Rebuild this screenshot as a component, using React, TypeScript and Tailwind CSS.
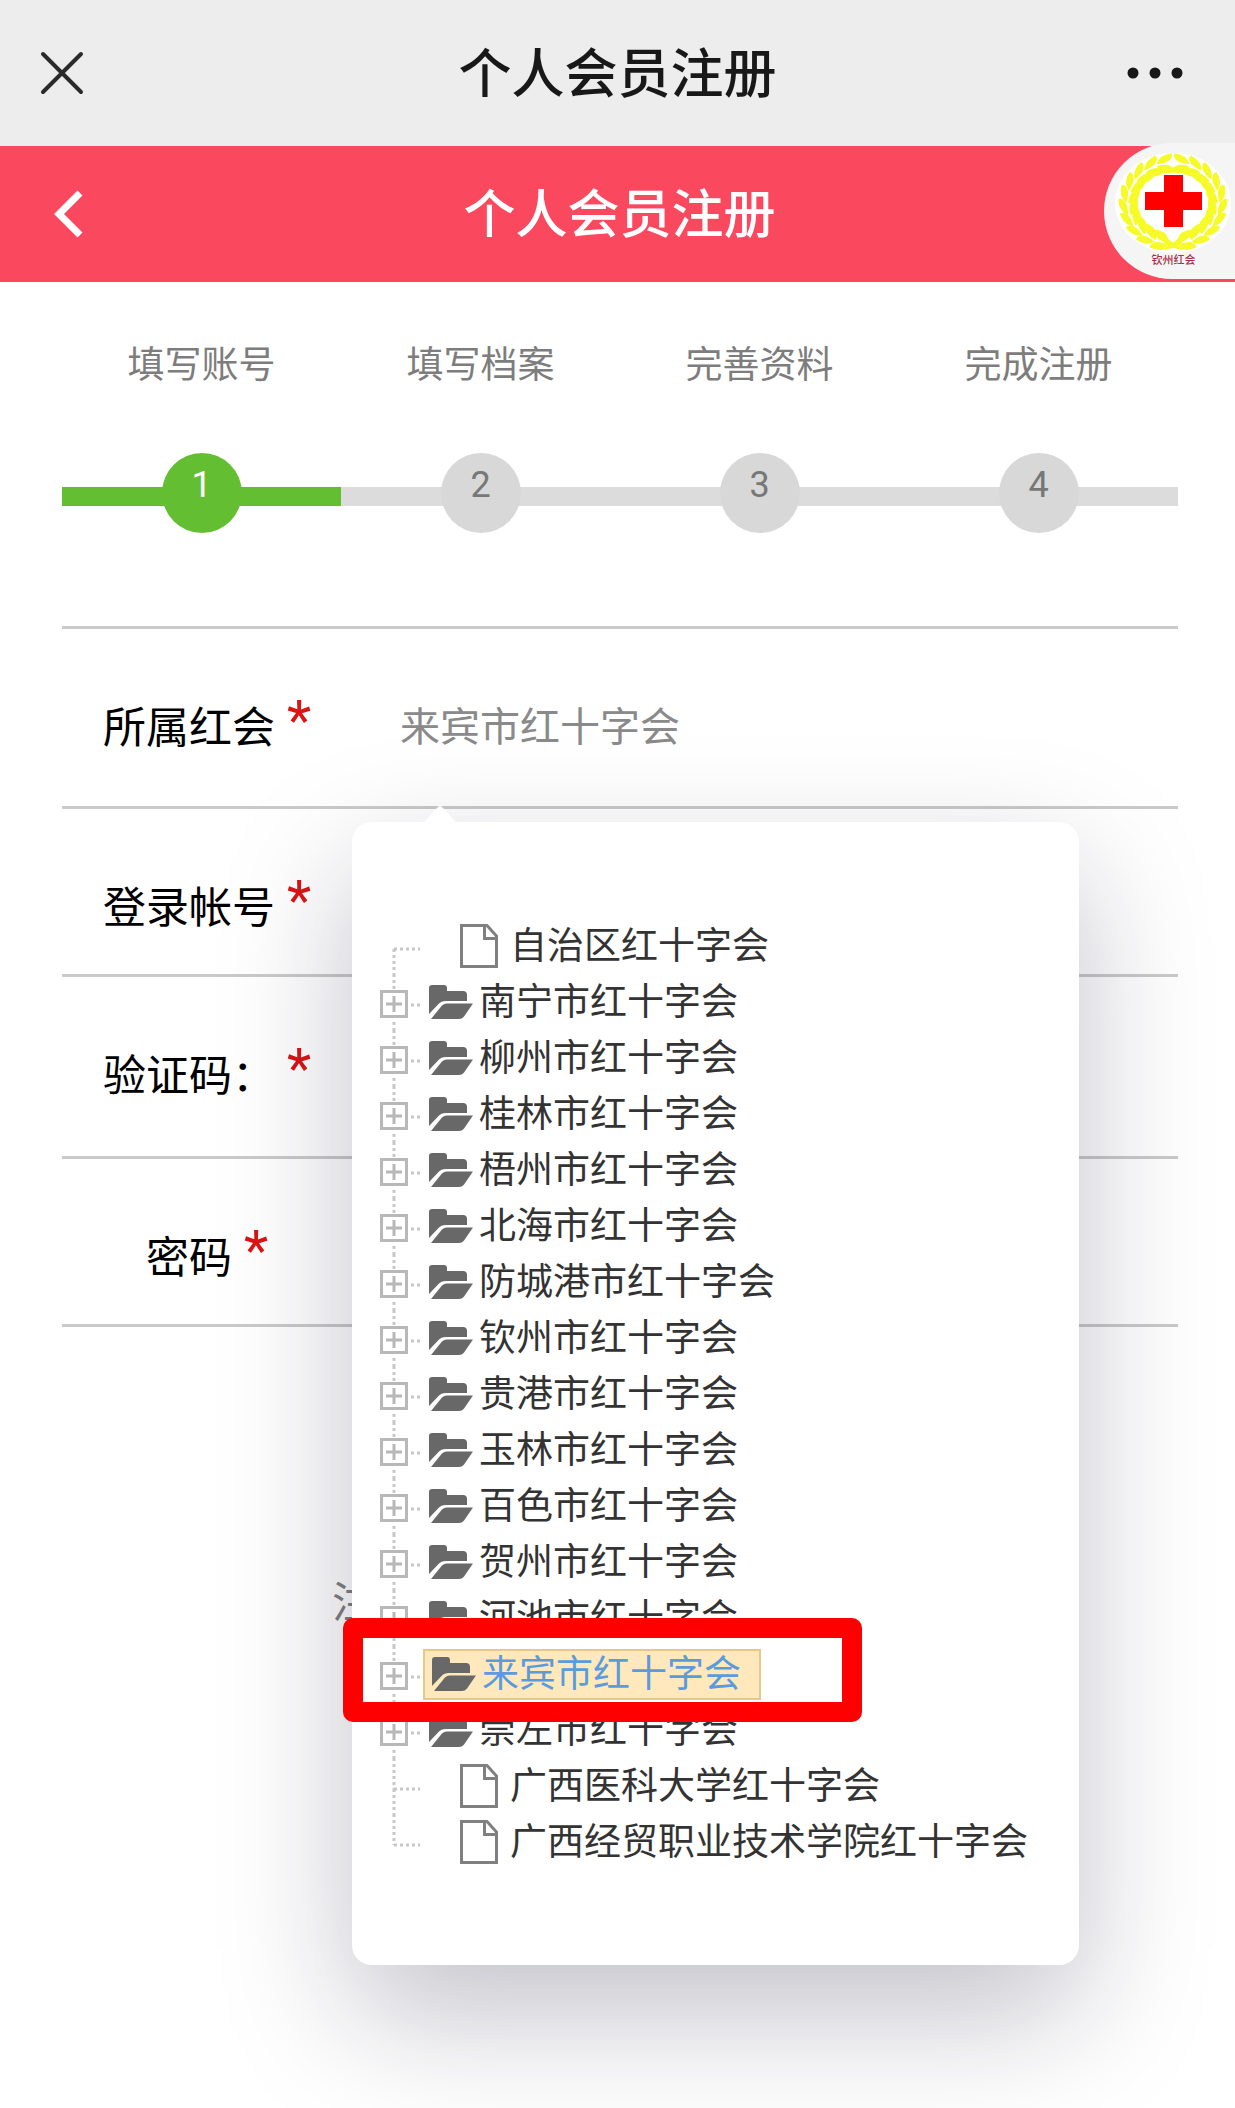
import { useState } from "react";
import clsx from "clsx";

type TreeNode = {
  name: string;
  leaf?: boolean;
};

const steps = ["填写账号", "填写档案", "完善资料", "完成注册"];

const nodes: TreeNode[] = [
  { name: "自治区红十字会", leaf: true },
  { name: "南宁市红十字会" },
  { name: "柳州市红十字会" },
  { name: "桂林市红十字会" },
  { name: "梧州市红十字会" },
  { name: "北海市红十字会" },
  { name: "防城港市红十字会" },
  { name: "钦州市红十字会" },
  { name: "贵港市红十字会" },
  { name: "玉林市红十字会" },
  { name: "百色市红十字会" },
  { name: "贺州市红十字会" },
  { name: "河池市红十字会" },
  { name: "来宾市红十字会" },
  { name: "崇左市红十字会" },
  { name: "广西医科大学红十字会", leaf: true },
  { name: "广西经贸职业技术学院红十字会", leaf: true },
];

const inputClass =
  "ml-[89px] h-[60px] min-w-0 flex-1 bg-transparent text-[40px] leading-[60px] text-[#8a8a8a] outline-none";

// one side of the wreath, bottom to top; the other side is mirrored
const leaves = Array.from({ length: 10 }, (_, i) => {
  const deg = 74 - i * 17;
  const t = (deg * Math.PI) / 180;
  return {
    x: 45 * Math.cos(t),
    y: 40 * Math.sin(t),
    angle: deg - 90,
  };
});

function Emblem() {
  const side = leaves.map((leaf, i) => (
    <g key={i} transform={`translate(${leaf.x} ${leaf.y}) rotate(${leaf.angle})`}>
      <path d="M-8 -1Q-5 -12 8 -10Q10 -6 5 -3Q0 0 -8 -1Z" />
      <path d="M-8 1Q-3 10 9 9Q10 5 5 2Q0 0 -8 1Z" />
    </g>
  ));
  return (
    <svg viewBox="0 0 131 110" className="h-[110px] w-[131px]" aria-hidden="true">
      <ellipse cx="69" cy="60" rx="58" ry="50" fill="#fff" />
      <g fill="#f6fa28" transform="translate(69 60)">
        <g>{side}</g>
        <g transform="scale(-1 1)">{side}</g>
        <path d="M-18 47Q-4 44 6 35L10 39Q0 48 -18 47Z" />
        <path d="M18 47Q4 44 -6 35L-10 39Q0 48 18 47Z" />
      </g>
      <path d="M60 32h19v17h19v18H79v17H60V67H41V49h19z" fill="#fe0000" />
    </svg>
  );
}

function FileIcon() {
  return (
    <svg viewBox="0 0 38 44" className="h-11 w-[38px] shrink-0" fill="none" stroke="#808080" strokeWidth="3">
      <path d="M1.5 1.5H27L36.5 12V42.5H1.5z" />
      <path d="M24.5 2V14.5H36" />
    </svg>
  );
}

function FolderIcon() {
  return (
    <svg viewBox="0 0 44 34" className="h-[34px] w-11 shrink-0" fill="#686868">
      <path d="M0 29V3Q0 0 3 0H15Q18 0 18 3V6H34Q38 6 38 10V16H16Q12 16 10 18.500Z" />
      <path d="M2 34L13 20.500Q15 18.500 18 18.500H44L35 31.500Q33 34 30 34Z" />
    </svg>
  );
}

function Switcher({ leaf, first, last }: { leaf?: boolean; first: boolean; last: boolean }) {
  return (
    <svg viewBox="0 0 40 56" className="h-14 w-10 shrink-0" fill="none" stroke="#c8c8c8" strokeWidth="3">
      <g strokeDasharray="3 3">
        {!first && <path d={leaf ? "M14 0V31" : "M14 0V16"} />}
        {!last && <path d={leaf ? "M14 31V56" : "M14 48V56"} />}
        <path d={leaf ? "M14 31H40" : "M31 31H40"} />
      </g>
      {!leaf && (
        <g strokeWidth="3" stroke="#b8b8b8">
          <rect x="1.500" y="17.500" width="25" height="25" />
          <path d="M6 30H22M14 22V38" />
        </g>
      )}
    </svg>
  );
}

function OrgTree({ value, onSelect }: { value: string; onSelect: (name: string) => void }) {
  return (
    <div className="absolute top-[193px] left-[290px] z-10 w-max rounded-[20px] bg-white pt-24 pr-[51px] pb-[95px] pl-7 shadow-[0_50px_130px_rgba(20,20,50,0.26)]">
      <svg viewBox="0 0 32 16" className="absolute -top-4 left-[72px] h-4 w-8" fill="#fff">
        <path d="M0 16L14 1Q16 -1 18 1L32 16z" />
      </svg>
      <ul>
        {nodes.map((node, i) => {
          const selected = node.name === value;
          return (
            <li key={node.name} className="relative flex h-14 items-center">
              <Switcher leaf={node.leaf} first={i === 0} last={i === nodes.length - 1} />
              <button
                type="button"
                onClick={() => onSelect(node.name)}
                className={clsx(
                  "flex items-center text-[37px] leading-[47px] whitespace-nowrap",
                  node.leaf ? "ml-10 gap-3" : "gap-[6px]",
                  !node.leaf && !selected && "ml-[9px]",
                  selected
                    ? "ml-[3px] border-2 border-[#e8c88a] bg-[#fee8bc] pr-[18px] pl-[7px] text-[#5b9bdc]"
                    : "text-[#333]"
                )}
              >
                {node.leaf ? <FileIcon /> : <FolderIcon />}
                {node.name}
              </button>
              {selected && (
                <div className="pointer-events-none absolute -top-7 -left-[37px] z-10 h-[104px] w-[519px] rounded-[10px] border-[20px] border-[#fe0000]" />
              )}
            </li>
          );
        })}
      </ul>
    </div>
  );
}

function FieldLabel({ htmlFor, text }: { htmlFor: string; text: string }) {
  return (
    <label
      htmlFor={htmlFor}
      className="flex w-[208px] shrink-0 justify-center gap-3 text-[43px] leading-[60px] whitespace-nowrap text-black"
    >
      {text}
      <span className="text-[56px] leading-[46px] text-[#dc1414]">*</span>
    </label>
  );
}

export default function App() {
  const [org, setOrg] = useState("来宾市红十字会");

  return (
    <div className="min-h-screen overflow-hidden bg-white font-['Roboto','Noto_Sans_CJK_SC',sans-serif]">
      <header className="grid h-[146px] grid-cols-[1fr_auto_1fr] items-center bg-[#ededed] pr-[52px] pl-10 text-[#181818]">
        <button type="button" aria-label="关闭" className="justify-self-start">
          <svg viewBox="0 0 44 44" className="h-11 w-11" stroke="#2a2a2a" strokeWidth="4" strokeLinecap="round">
            <path d="M3 3L41 41M41 3L3 41" />
          </svg>
        </button>
        <h1 className="pt-1 pl-3 text-[53px] leading-[72px] font-medium">个人会员注册</h1>
        <button type="button" aria-label="更多" className="justify-self-end">
          <svg viewBox="0 0 56 12" className="h-3 w-14" fill="#181818">
            <circle cx="6" cy="6" r="5.500" />
            <circle cx="28" cy="6" r="5.500" />
            <circle cx="50" cy="6" r="5.500" />
          </svg>
        </button>
      </header>

      <div className="relative flex h-[136px] items-center justify-center bg-[#fa485e] text-white">
        <button type="button" aria-label="返回" className="absolute left-[52px]">
          <svg viewBox="0 0 32 48" className="h-12 w-8" fill="none" stroke="#fff" strokeWidth="7">
            <path d="M28 3L7 24L28 45" />
          </svg>
        </button>
        <h2 className="pt-1 pl-1 text-[52px] leading-[72px] font-medium">个人会员注册</h2>
        <div className="absolute -top-[3px] right-0 flex h-[136px] flex-col items-center rounded-l-full bg-[#f5f5f5]">
          <Emblem />
          <span className="pl-2 text-[11px] leading-[16px] font-medium text-[#a83248]">钦州红会</span>
        </div>
      </div>

      <main className="pr-[57px] pl-[62px]">
        <ol className="grid grid-cols-4 pt-14">
          {steps.map((step, i) => (
            <li key={step} className="text-center">
              <p className="text-[37px] leading-[56px] text-[#7d7d7d]">{step}</p>
              <div className="relative mt-[59px] flex justify-center">
                <span
                  className={clsx("absolute inset-x-0 top-[34px] h-[19px]", i === 0 ? "bg-[#64be32]" : "bg-[#dcdcdc]")}
                />
                <span
                  className={clsx(
                    "relative h-20 w-20 rounded-full text-[36px] leading-[64px]",
                    i === 0 ? "bg-[#64be32] text-white" : "bg-[#d8d8d8] text-[#777]"
                  )}
                >
                  {i + 1}
                </span>
              </div>
            </li>
          ))}
        </ol>

        <form className="mt-[93px]" onSubmit={(e) => e.preventDefault()}>
          <div className="relative flex border-t-3 border-[#cacaca] pt-[69px] pb-12 pl-[41px]">
            <FieldLabel htmlFor="org" text="所属红会" />
            <input id="org" readOnly value={org} className={inputClass} />
            <OrgTree value={org} onSelect={setOrg} />
          </div>
          <div className="flex border-t-3 border-[#cacaca] pt-[69px] pb-9 pl-[41px]">
            <FieldLabel htmlFor="account" text="登录帐号" />
            <input id="account" className={inputClass} />
          </div>
          <div className="flex border-t-3 border-[#cacaca] pt-[69px] pb-[50px] pl-[41px]">
            <FieldLabel htmlFor="code" text="验证码：" />
            <input id="code" className={inputClass} />
          </div>
          <div className="flex border-y-3 border-[#cacaca] pt-[69px] pb-9 pl-[41px]">
            <FieldLabel htmlFor="password" text="密码" />
            <input id="password" type="password" className={inputClass} />
          </div>
          <button type="submit" className="mt-[246px] ml-[270px] block text-[43px] leading-[60px] text-[#808080]">
            注册
          </button>
        </form>
      </main>
    </div>
  );
}
